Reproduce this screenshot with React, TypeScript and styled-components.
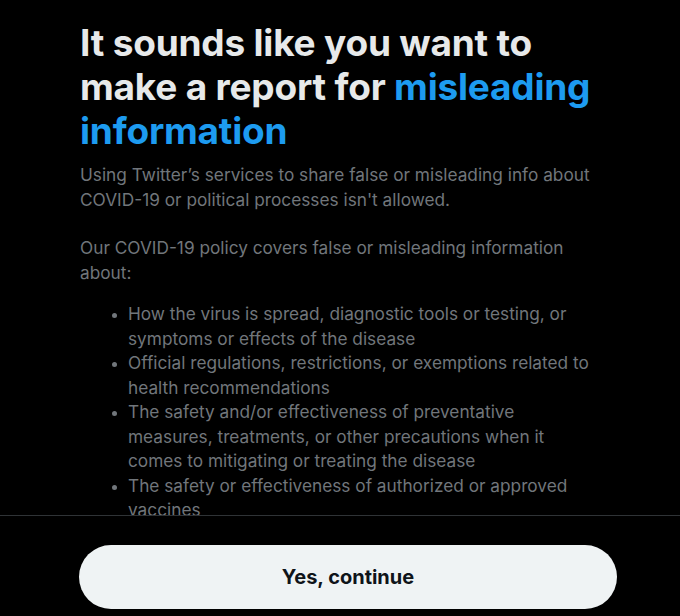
import React from "react";
import styled, { createGlobalStyle } from "styled-components";

const Global = createGlobalStyle`
  html, body { margin: 0; padding: 0; background: #000; }
  body { font-family: Inter, "Noto Sans", sans-serif; -webkit-font-smoothing: antialiased; }
  * { box-sizing: border-box; }
`;

const Page = styled.div`
  width: 680px;
  height: 616px;
  background: #000;
  display: flex;
  flex-direction: column;
  overflow: hidden;
`;

const ScrollArea = styled.div`
  height: 515px;
  flex: none;
  overflow: hidden;
  padding: 21px 84px 0 80px;
`;

const Title = styled.h1`
  margin: 0;
  font-family: Inter, "Noto Sans", sans-serif;
  font-weight: 700;
  font-size: 37px;
  line-height: 44px;
  color: #e7e9ea;
  letter-spacing: -0.2px;
`;

const Accent = styled.span`
  color: #1d9bf0;
`;

const Body = styled.div`
  margin-top: 10px;
  font-size: 17.25px;
  line-height: 24.5px;
  color: #71767b;
`;

const Para = styled.p<{ $last?: boolean }>`
  margin: 0 0 ${(p) => (p.$last ? "0" : "24px")} 0;
`;

const List = styled.ul`
  margin: 17px 0 0 0;
  padding: 0 0 0 48px;
  list-style: disc;
  li::marker { font-size: 14px; }
`;

const Item = styled.li`
  margin: 0;
`;

const Footer = styled.div`
  flex: 1;
  border-top: 1px solid #2f3336;
  padding: 29px 63px 0 79px;
`;

const Button = styled.button`
  width: 100%;
  height: 64px;
  border: none;
  border-radius: 9999px;
  background: #eff3f4;
  color: #0f1419;
  font-family: Inter, "Noto Sans", sans-serif;
  font-weight: 700;
  font-size: 20px;
  cursor: pointer;
`;

export default function App() {
  return (
    <>
      <Global />
      <Page>
        <ScrollArea>
          <Title>
            It sounds like you want to make a report for{" "}
            <Accent>misleading information</Accent>
          </Title>
          <Body>
            <Para>
              Using Twitter’s services to share false or misleading info about COVID-19 or political
              processes isn't allowed.
            </Para>
            <Para $last>
              Our COVID-19 policy covers false or misleading information about:
            </Para>
            <List>
              <Item>How the virus is spread, diagnostic tools or testing, or symptoms or effects of the disease</Item>
              <Item>Official regulations, restrictions, or exemptions related to health recommendations</Item>
              <Item>The safety and/or effectiveness of preventative measures, treatments, or other precautions when it comes to mitigating or treating the disease</Item>
              <Item>The safety or effectiveness of authorized or approved vaccines</Item>
            </List>
          </Body>
        </ScrollArea>
        <Footer>
          <Button>Yes, continue</Button>
        </Footer>
      </Page>
    </>
  );
}
